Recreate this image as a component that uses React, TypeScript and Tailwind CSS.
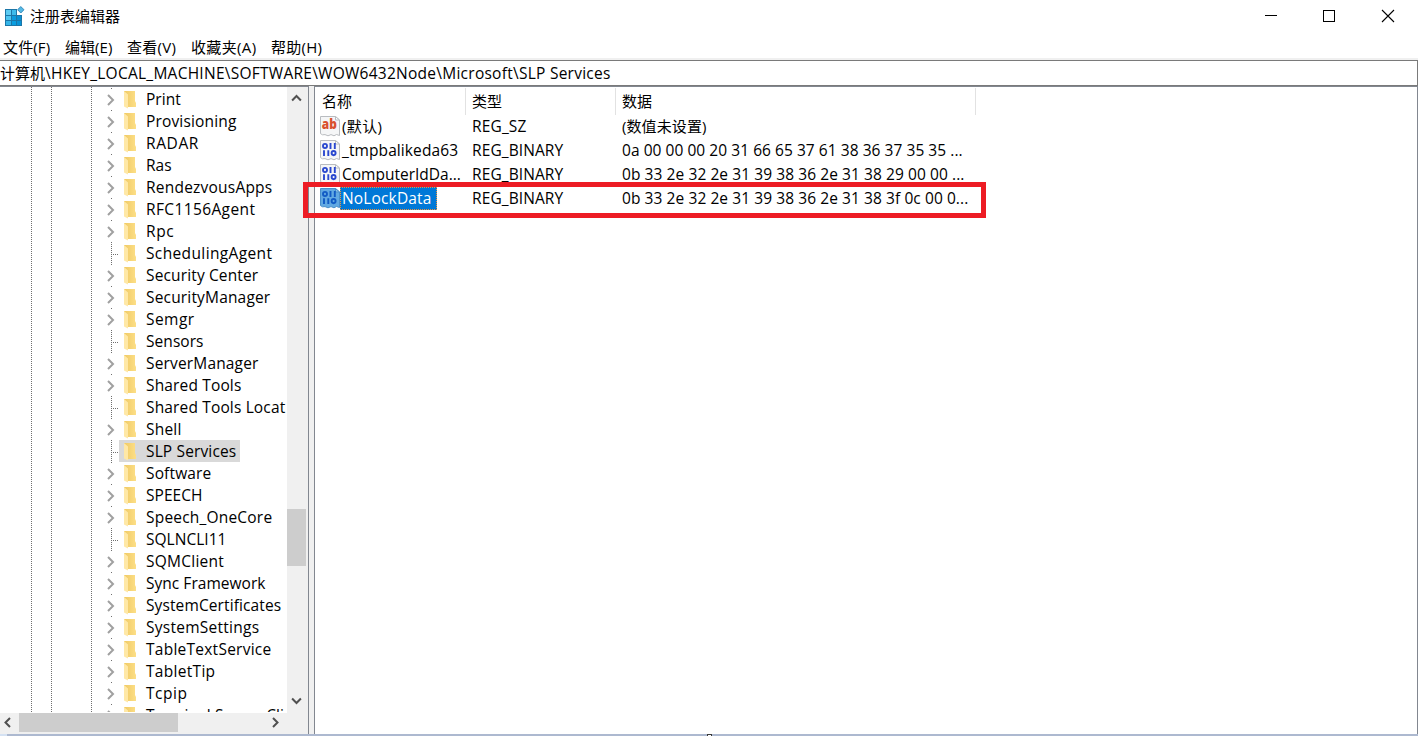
import type { ReactNode } from "react";

type TreeNode = { name: string; leaf?: boolean; selected?: boolean; tracking: string };

const nodes: TreeNode[] = [
  { name: "Print", tracking: "tracking-[0.05px]" },
  { name: "Provisioning", tracking: "tracking-[0.16px]" },
  { name: "RADAR", tracking: "tracking-[0.6px]" },
  { name: "Ras", tracking: "tracking-[0.05px]" },
  { name: "RendezvousApps", tracking: "tracking-[0.22px]" },
  { name: "RFC1156Agent", tracking: "tracking-[0.38px]" },
  { name: "Rpc", tracking: "tracking-[0.6px]" },
  { name: "SchedulingAgent", leaf: true, tracking: "tracking-[0.37px]" },
  { name: "Security Center", tracking: "tracking-[0.14px]" },
  { name: "SecurityManager", tracking: "tracking-[0.17px]" },
  { name: "Semgr", tracking: "tracking-[0.45px]" },
  { name: "Sensors", leaf: true, tracking: "tracking-[0.06px]" },
  { name: "ServerManager", tracking: "tracking-[0.16px]" },
  { name: "Shared Tools", tracking: "tracking-[0.15px]" },
  { name: "Shared Tools Locat", leaf: true, tracking: "tracking-[0.15px]" },
  { name: "Shell", tracking: "tracking-[0.22px]" },
  { name: "SLP Services", leaf: true, selected: true, tracking: "tracking-[0.14px]" },
  { name: "Software", tracking: "tracking-[0.15px]" },
  { name: "SPEECH", tracking: "tracking-[0.05px]" },
  { name: "Speech_OneCore", tracking: "tracking-[0.2px]" },
  { name: "SQLNCLI11", leaf: true, tracking: "tracking-[0.02px]" },
  { name: "SQMClient", tracking: "tracking-[0.25px]" },
  { name: "Sync Framework", tracking: "tracking-[0.03px]" },
  { name: "SystemCertificates", tracking: "tracking-[0.11px]" },
  { name: "SystemSettings", tracking: "tracking-[0.26px]" },
  { name: "TableTextService", tracking: "tracking-[0.25px]" },
  { name: "TabletTip", tracking: "tracking-[0.3px]" },
  { name: "Tcpip", tracking: "tracking-[0.55px]" },
  { name: "Terminal Server Cli", tracking: "tracking-[0.12px]" },
];

const values = [
  { name: "(默认)", kind: "sz", type: "REG_SZ", data: "(数值未设置)", nameT: "text-[15px] tracking-[0.4px]", typeT: "tracking-[0.15px]", dataT: "text-[15px] tracking-[0.1px]" },
  { name: "_tmpbalikeda63", kind: "bin", type: "REG_BINARY", data: "0a 00 00 00 20 31 66 65 37 61 38 36 37 35 35 ...", nameT: "tracking-[0.1px]", typeT: "tracking-[0.1px]", dataT: "tracking-[0.05px]" },
  { name: "ComputerIdDa...", kind: "bin", type: "REG_BINARY", data: "0b 33 2e 32 2e 31 39 38 36 2e 31 38 29 00 00 ...", nameT: "tracking-[0px]", typeT: "tracking-[0.1px]", dataT: "tracking-[0.08px]" },
  { name: "NoLockData", kind: "bin", selected: true, type: "REG_BINARY", data: "0b 33 2e 32 2e 31 39 38 36 2e 31 38 3f 0c 00 0...", nameT: "tracking-[0.15px]", typeT: "tracking-[0.1px]", dataT: "tracking-[0.08px]" },
];

const menu = [
  { label: "文件(F)", cls: "w-[62px] tracking-[0.15px]" },
  { label: "编辑(E)", cls: "w-[62px] tracking-[0.05px]" },
  { label: "查看(V)", cls: "w-[64px] tracking-[0.3px]" },
  { label: "收藏夹(A)", cls: "w-[80px] tracking-[0.35px]" },
  { label: "帮助(H)", cls: "tracking-[0.25px]" },
];

function AppIcon() {
  return (
    <svg width="20" height="20" viewBox="0 0 20 20" shapeRendering="crispEdges">
      <rect x="0" y="3" width="17" height="17" fill="#1c76a8" />
      <rect x="1" y="4" width="5" height="5" fill="#5ccbf2" />
      <rect x="7" y="4" width="4" height="5" fill="#3dbbec" />
      <rect x="1" y="10" width="5" height="4" fill="#4fc5f0" />
      <rect x="7" y="10" width="4" height="4" fill="#0b9bdd" />
      <rect x="12" y="10" width="4" height="4" fill="#0a8fd2" />
      <rect x="1" y="15" width="5" height="4" fill="#35b5e8" />
      <rect x="7" y="15" width="4" height="4" fill="#0a9ee0" />
      <rect x="12" y="15" width="4" height="4" fill="#0993d6" />
      <rect x="12" y="3" width="5" height="6" fill="#fff" />
      <path shapeRendering="auto" d="M15.8 0.6 19 3.7 15.8 7 12.6 3.7Z" fill="#55b9e6" stroke="#2f86b6" strokeWidth="0.9" />
    </svg>
  );
}

function FolderIcon() {
  return (
    <svg width="12" height="18" viewBox="0 0 12 18">
      <defs>
        <linearGradient id="folder-back" x1="0" x2="1">
          <stop offset="0" stopColor="#efc964" />
          <stop offset="1" stopColor="#fddf87" />
        </linearGradient>
      </defs>
      <path d="M0 0H11V10L12 12V16H4L0 14Z" fill="url(#folder-back)" />
      <path d="M0 0 4 3.4V17.6L3 17 0 15.4Z" fill="#ffe8a6" />
    </svg>
  );
}

function TreeChevron() {
  return (
    <svg width="8" height="12" viewBox="0 0 8 12" fill="none" stroke="#a0a0a0" strokeWidth="2">
      <path d="M1 1 6 6 1 11" />
    </svg>
  );
}

function ValueIcon({ kind, selected }: { kind: string; selected?: boolean }) {
  const paper = selected ? "#62a9e2" : "#f5f6f7";
  const edge = selected ? "#4a8fca" : "#b9bcc0";
  const ink = selected ? "#125bc4" : "#2a48cf";
  return (
    <svg width="20" height="21" viewBox="0 0 20 21">
      <path d="M0.5 0.5H15.5L19.5 4V19.5L16.5 18.5 14 19.8 11 18.6 8 19.8 5 18.6 2.5 18.8 0.5 17.6Z" fill={paper} stroke={edge} />
      <path d="M15.5 0.5V4H19.5Z" fill={selected ? "#8cc0ea" : "#fff"} stroke={edge} />
      {kind === "sz" ? (
        <text x="1.8" y="13" fontFamily="Open Sans" fontWeight="800" fontSize="14" textLength="15" lengthAdjust="spacingAndGlyphs" fill="#d9502f">ab</text>
      ) : (
        <g fill="none" stroke={ink} strokeWidth="1.9">
          <ellipse cx="5" cy="6" rx="2" ry="2.1" />
          <path d="M10.5 3V9M14.8 3V9" />
          <path d="M4 10.2V16M8.3 10.2V16" />
          <ellipse cx="13.6" cy="13.1" rx="2" ry="2.1" />
        </g>
      )}
    </svg>
  );
}

function ScrollArrow({ d }: { d: string }) {
  return (
    <svg width="12" height="12" viewBox="0 0 12 12" fill="none" stroke="#505050" strokeWidth="2">
      <path d={d} />
    </svg>
  );
}

function Guide({ className }: { className: string }) {
  return (
    <div className={`w-px shrink-0 bg-[repeating-linear-gradient(to_bottom,#6f6f6f_0px,#6f6f6f_1px,transparent_1px,transparent_2px)] ${className}`} />
  );
}

function TreeRow({ node }: { node: TreeNode }) {
  return (
    <div className="flex h-[22px] shrink-0">
      <div className="flex w-[12px] shrink-0">
        {node.leaf ? (
          <>
            <Guide className="ml-[4px] h-[22px]" />
            <div className="mt-[12px] ml-px h-px w-[6px] bg-[repeating-linear-gradient(to_right,#6f6f6f_0px,#6f6f6f_1px,transparent_1px,transparent_2px)]" />
          </>
        ) : (
          <div className="w-full">
            <div className="ml-[4px] h-px w-px bg-[#6f6f6f]" />
            <div className="mt-[5px]">
              <TreeChevron />
            </div>
          </div>
        )}
      </div>
      <div className={`flex h-[22px] shrink-0 pl-[5px] ${node.selected ? "w-[121px] bg-[#d9d9d9]" : ""}`}>
        <div className="w-[22px] shrink-0 pt-[3px]">
          <FolderIcon />
        </div>
        <span className={`leading-[22px] whitespace-nowrap ${node.tracking}`}>{node.name}</span>
      </div>
    </div>
  );
}

function Col({ className, children }: { className: string; children: ReactNode }) {
  return <div className={`shrink-0 whitespace-nowrap ${className}`}>{children}</div>;
}

export default function App() {
  return (
    <div className="relative flex h-[736px] w-[1418px] flex-col overflow-hidden bg-white font-['Open_Sans','Noto_Sans_CJK_SC',sans-serif] text-[15px] text-black">
      <header className="flex h-[36px] shrink-0 items-start">
        <div className="mt-[6px] ml-[5px] w-[25px]">
          <AppIcon />
        </div>
        <h1 className="mt-[5px] leading-[22px]">注册表编辑器</h1>
        <div className="mt-[9px] ml-auto flex pr-[23px]">
          <svg className="mr-[45px]" width="14" height="14" viewBox="0 0 14 14"><path d="M1 6.5H13" stroke="#000" /></svg>
          <svg className="mr-[44px]" width="14" height="14" viewBox="0 0 14 14"><rect x="0.5" y="1.5" width="11" height="11" fill="none" stroke="#000" /></svg>
          <svg width="14" height="14" viewBox="0 0 14 14"><path d="M1 1 13 13M13 1 1 13" stroke="#000" strokeWidth="1.1" /></svg>
        </div>
      </header>

      <nav className="flex h-[22px] shrink-0 pl-[3px] leading-[23px]">
        {menu.map((m) => (
          <span key={m.label} className={`whitespace-nowrap ${m.cls}`}>{m.label}</span>
        ))}
      </nav>

      <div className="h-[2px] shrink-0 bg-[#f0f0f0]" />
      <div className="h-[26px] shrink-0 border-y border-r border-[#7a7a7a] text-[15.5px] leading-[24px] whitespace-nowrap">
        <span className="text-[15px]">计算机</span>
        <span className="tracking-[0.26px]">\HKEY_LOCAL_MACHINE\SOFTWARE\WOW6432Node\Microsoft\SLP Services</span>
      </div>

      <main className="flex h-[648px] shrink-0 bg-[#f0f0f0] text-[15.5px]">
        <section className="flex w-[309px] flex-col border-t border-r border-[#828790]">
          <div className="flex h-[626px]">
            <div className="flex h-[626px] w-[287px] bg-white">
              <Guide className="ml-[31px] h-full" />
              <Guide className="ml-[19px] h-full" />
              <Guide className="ml-[39px] h-full" />
              <div className="ml-[15px] flex h-[625px] w-[179px] flex-col overflow-hidden pt-px">
                {nodes.map((n) => (
                  <TreeRow key={n.name} node={n} />
                ))}
              </div>
            </div>
            <div className="flex w-[19px] flex-col items-center pt-[5px] pb-[6px]">
              <ScrollArrow d="M1.1 8.5 5.5 4 9.9 8.5" />
              <div className="mt-[405px] h-[57px] w-[19px] bg-[#cdcdcd]" />
              <div className="mt-auto">
                <ScrollArrow d="M1.1 3.5 5.5 8 9.9 3.5" />
              </div>
            </div>
          </div>
          <div className="flex h-[19px] items-center pl-[2px]">
            <ScrollArrow d="M8 1 3.5 5.5 8 10" />
            <div className="ml-[5px] h-[19px] w-[159px] bg-[#cdcdcd]" />
            <div className="ml-[91px]">
              <ScrollArrow d="M4 1 8.5 5.5 4 10" />
            </div>
          </div>
        </section>

        <section className="ml-[5px] flex flex-1 flex-col border-t border-r border-l border-[#828790] bg-white">
          <div className="flex h-[28px] pt-px text-[15px] leading-[26px]">
            <Col className="w-[151px] border-r border-[#e2e2e2] pl-[7px]">名称</Col>
            <Col className="w-[150px] border-r border-[#e2e2e2] pl-[6px]">类型</Col>
            <Col className="w-[360px] border-r border-[#e2e2e2] pl-[6px]">数据</Col>
          </div>
          {values.map((v) => (
            <div key={v.name} className="flex h-[24px] shrink-0">
              <div className="flex w-[157px] shrink-0 pl-[5px]">
                <div className="w-[20px] shrink-0 pt-px">
                  <ValueIcon kind={v.kind} selected={v.selected} />
                </div>
                <span
                  className={`h-[23px] whitespace-nowrap ${v.nameT} ${
                    v.selected
                      ? "w-[97px] border border-dotted border-[#f0923a] bg-[#0078d7] pl-px leading-[20px] text-white"
                      : "pl-[2px] leading-[22px]"
                  }`}
                >
                  {v.name}
                </span>
              </div>
              <Col className={`w-[150px] leading-[22px] ${v.typeT}`}>{v.type}</Col>
              <Col className={`leading-[22px] ${v.dataT}`}>{v.data}</Col>
            </div>
          ))}
        </section>
      </main>

      <footer className="flex h-[2px] shrink-0 bg-[#adb9d0]">
        <div className="h-[2px] w-[7px] bg-[#d5e2f3]" />
        <div className="ml-[700px] h-[2px] w-[5px] border-x border-t border-[#3a3a3a] bg-white" />
      </footer>

      <div className="pointer-events-none absolute top-[182px] left-[303px] h-[36px] w-[683px] border-[5px] border-[#ed1c24]" />
    </div>
  );
}
